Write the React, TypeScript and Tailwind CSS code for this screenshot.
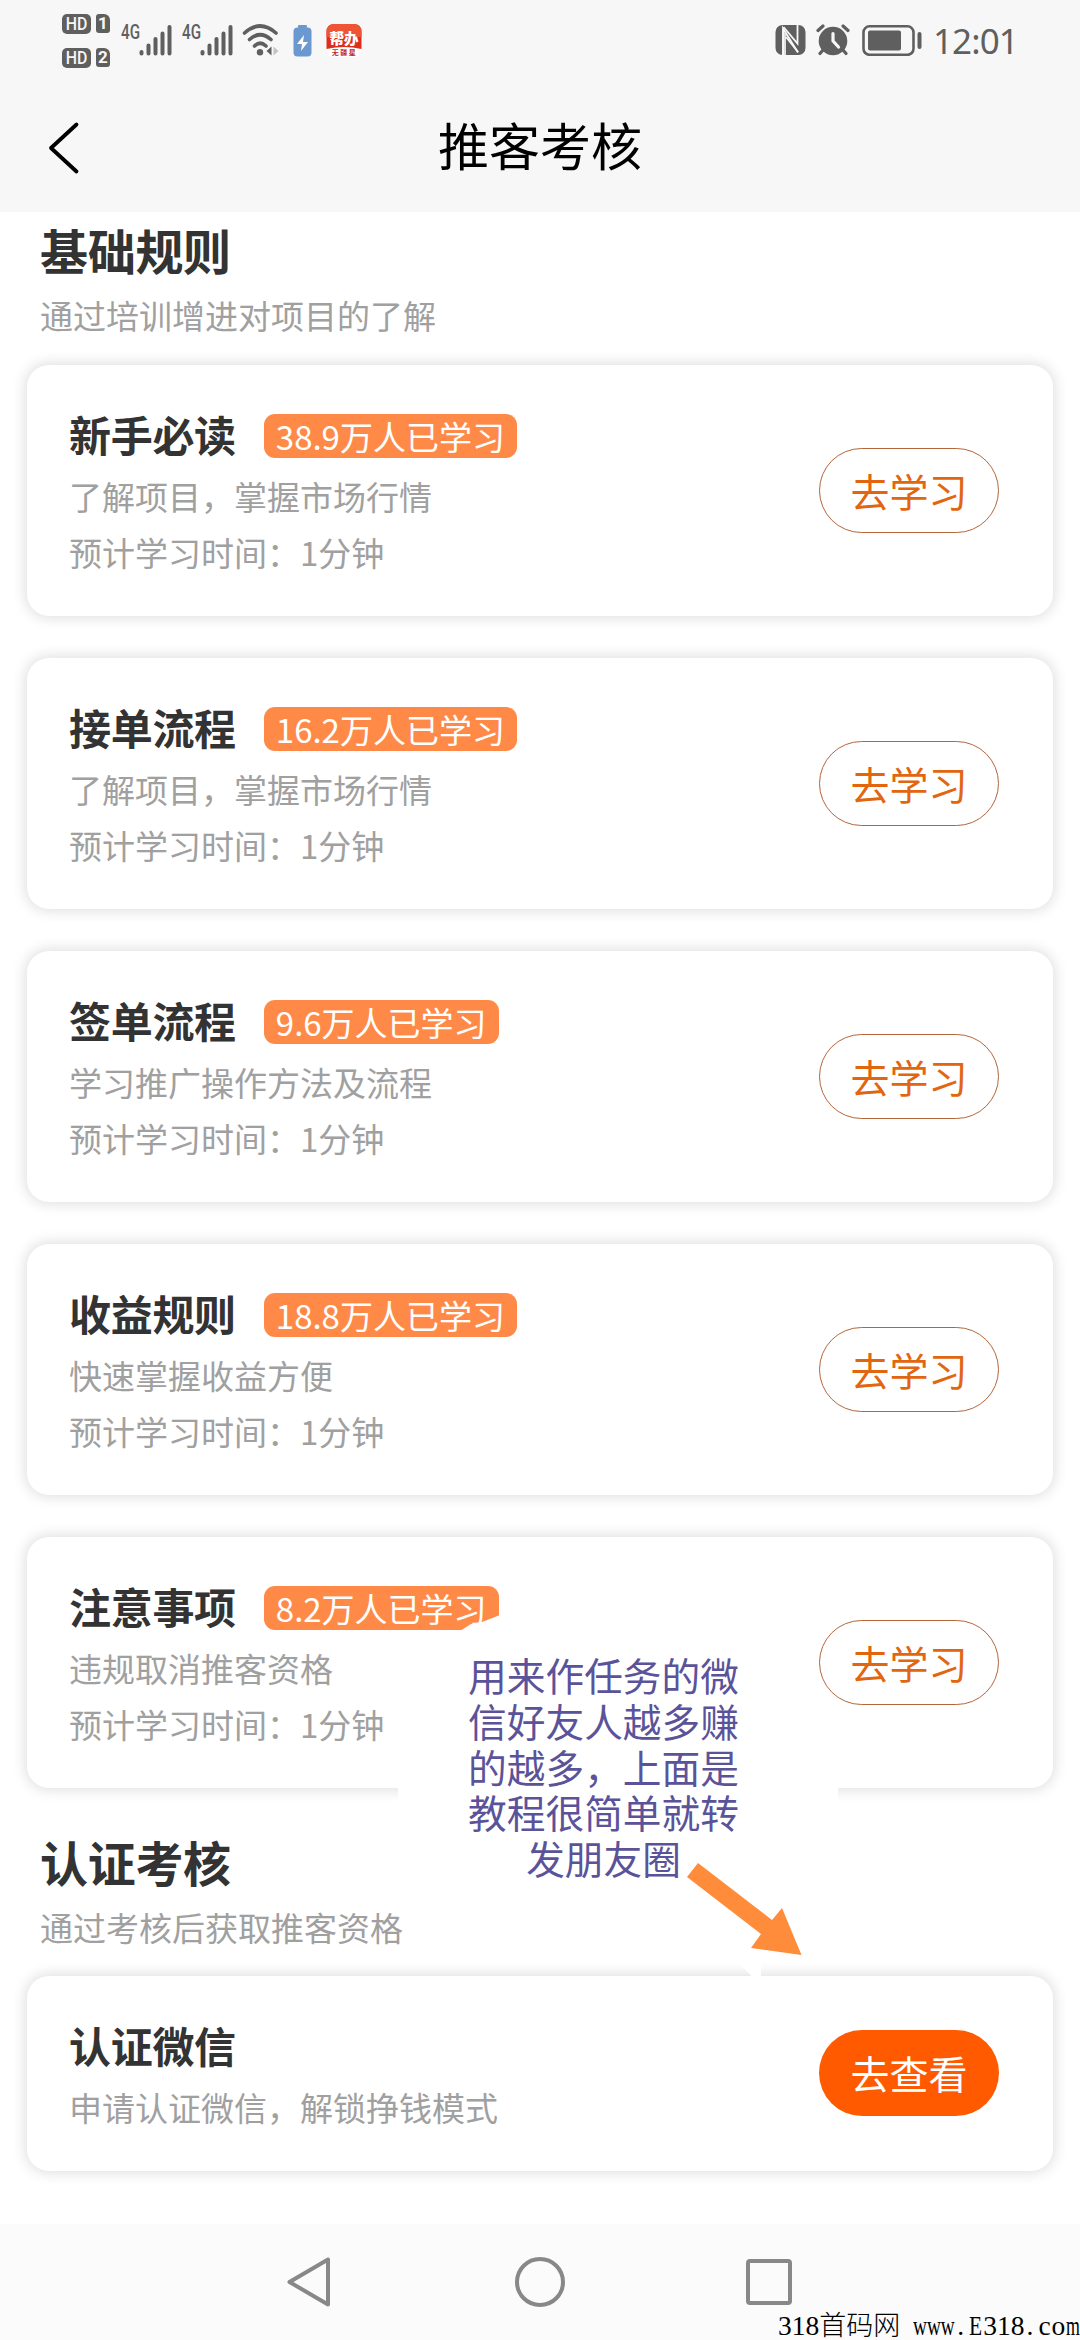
import React from "react";

type Lesson = { title: string; badge: string; desc: string };

const lessons: Lesson[] = [
  { title: "新手必读", badge: "38.9万人已学习", desc: "了解项目，掌握市场行情" },
  { title: "接单流程", badge: "16.2万人已学习", desc: "了解项目，掌握市场行情" },
  { title: "签单流程", badge: "9.6万人已学习", desc: "学习推广操作方法及流程" },
  { title: "收益规则", badge: "18.8万人已学习", desc: "快速掌握收益方便" },
  { title: "注意事项", badge: "8.2万人已学习", desc: "违规取消推客资格" },
];

const noteLines = ["用来作任务的微", "信好友人越多赚", "的越多，上面是", "教程很简单就转", "发朋友圈"];

function SimBadge({ n }: { n: string }) {
  return (
    <div className="flex h-[19px] items-center gap-[5px]">
      <span className="flex h-[20px] w-[29px] items-center justify-center rounded-[5px] bg-[#5f5f5f] font-['Roboto'] text-[18.500px] leading-[20px] font-medium text-[#f7f7f7]">
        <span className="scale-x-[0.86]">HD</span>
      </span>
      <span className="flex h-[19px] w-[14px] items-center justify-center rounded-[3px] rounded-tr-[6px] bg-[#5f5f5f] font-['Roboto'] text-[17px] leading-[19px] font-bold text-[#f7f7f7]">
        {n}
      </span>
    </div>
  );
}

function Signal() {
  return (
    <div className="flex h-[31px] w-[51px] items-start">
      <span className="w-[18px] origin-left scale-x-[0.78] font-['Roboto'] text-[19.500px] leading-[15px] font-medium text-[#5f5f5f]">4G</span>
      <svg className="h-[31px] w-[33px]" viewBox="0 0 33 31" stroke="#5f5f5f" strokeWidth="4" strokeLinecap="round">
        <path d="M2.5 27v1.5M9.5 20.5v8M16.5 14v14.5M23.5 8.5v20M30.5 2v26.5" />
      </svg>
    </div>
  );
}

function StatusBar() {
  return (
    <div className="flex h-[80px] items-start pl-[62px] text-[#5f5f5f]">
      <div className="mt-[14px] flex flex-col gap-[15px]">
        <SimBadge n="1" />
        <SimBadge n="2" />
      </div>
      <div className="mt-[25px] ml-[11px] flex gap-[10px]">
        <Signal />
        <Signal />
      </div>
      <svg className="mt-[24px] ml-[9px] h-[33px] w-[38px]" viewBox="0 0 38 33" fill="none" stroke="#5f5f5f" strokeWidth="3.6" strokeLinecap="round">
        <path d="M2.500 9Q18-5 34 9M7.500 15.500Q18 6 29 15.500M12.500 22Q18 16.500 24 22" />
        <circle cx="18" cy="28.200" r="3.200" fill="#5f5f5f" stroke="none" />
        <path d="M29.500 22.500v9l-5-4.500z" fill="#5f5f5f" stroke="none" />
        <path d="M31.500 22.500v9l5-4.500z" fill="#c4c4c4" stroke="none" />
      </svg>
      <svg className="mt-[25px] ml-[13px] h-[32px] w-[19px]" viewBox="0 0 19 32">
        <rect x="5" y="0" width="9" height="3" rx="1" fill="#6a98cf" />
        <rect x="0.500" y="2.500" width="18" height="29" rx="4" fill="#6a98cf" />
        <path d="M11 10L4 19h5l-1 7 7-9h-5z" fill="#fff" />
      </svg>
      <svg className="mt-[24px] ml-[14px] h-[33px] w-[36px]" viewBox="0 0 36 33">
        <rect x="0.500" y="0" width="35" height="33" rx="7" fill="#fff" />
        <path d="M.5 8q0-8 8-8h19q8 0 8 8v17Q18 21 .5 25z" fill="#df2d1c" />
        <path d="M.5 8q0-8 8-8h19q8 0 8 8v5H.5z" fill="#ee5535" />
        <text x="18" y="19.500" textAnchor="middle" fontSize="14.500" fontWeight="900" fill="#fff" fontFamily="Noto Sans CJK SC">帮办</text>
        <text x="18.500" y="31" textAnchor="middle" fontSize="7" letterSpacing="1.500" fontWeight="700" fill="#c22a1c" fontFamily="Noto Sans CJK SC">无疆星</text>
      </svg>
      <div className="ml-auto flex w-[305px] items-start">
        <svg className="mt-[25px] h-[30px] w-[31px]" viewBox="0 0 31 30">
          <rect x="0.500" width="30" height="30" rx="7" fill="#5f5f5f" />
          <path d="M8 30V3.500L23 27.500" stroke="#f7f7f7" strokeWidth="1.800" fill="none" />
          <path d="M8.500 2L22.500 18.500V0M11 12l12 15" stroke="#f7f7f7" strokeWidth="1.800" fill="none" />
          <path d="M7 30V4.500l4 5V30z" fill="#f7f7f7" opacity="0.85" />
        </svg>
        <svg className="mt-[24px] ml-[10px] h-[32px] w-[34px]" viewBox="0 0 34 32" fill="none" strokeLinecap="round">
          <circle cx="17" cy="17" r="14.300" fill="#5f5f5f" />
          <path d="M2 6.500L7 2M32 6.500L27 2M7 26l-3 3.500M27 26l3 3.500" stroke="#5f5f5f" strokeWidth="3.200" />
          <path d="M17 9.500V17l5.500 6" stroke="#f7f7f7" strokeWidth="3.200" />
        </svg>
        <svg className="mt-[25px] ml-[12px] h-[31px] w-[60px]" viewBox="0 0 60 31">
          <rect x="1.500" y="1.300" width="50" height="28.500" rx="6" fill="none" stroke="#5f5f5f" strokeWidth="2.600" />
          <rect x="6" y="5.500" width="33" height="20" rx="2" fill="#5f5f5f" />
          <rect x="55.500" y="7" width="4" height="17" rx="2" fill="#5f5f5f" />
        </svg>
        <span className="mt-[19px] ml-[11px] font-['Noto_Sans'] text-[35px] leading-[44px] font-normal tracking-[-0.9px]">12:01</span>
      </div>
    </div>
  );
}

function Card({ children, action, primary, className }: { children: React.ReactNode; action: string; primary?: boolean; className: string }) {
  return (
    <div className={"flex items-start justify-between rounded-[22px] bg-white pr-[54px] pl-[42px] shadow-[0_0_14px_2px_rgba(0,0,0,0.13)] " + className}>
      <div className="flex flex-col">{children}</div>
      <button
        className={
          "flex w-[180px] items-center justify-center rounded-full pb-[2px] text-[39px] leading-[44px] " +
          (primary ? "mt-[54px] h-[86px] bg-[#ff5a00] text-white" : "mt-[83px] h-[85px] border border-[#b5653a] text-[#e2660f]")
        }
      >
        {action}
      </button>
    </div>
  );
}

function SectionHead({ title, sub }: { title: string; sub: string }) {
  return (
    <div className="ml-[13px] flex flex-col">
      <h2 className="h-[60px] text-[48px] leading-[60px] font-bold tracking-[-0.3px] text-[#333]">{title}</h2>
      <p className="mt-[16px] h-[39px] text-[33px] leading-[40px] text-[#a0a0a0]">{sub}</p>
    </div>
  );
}

export default function App() {
  return (
    <div className="relative flex h-[2340px] w-[1080px] flex-col overflow-hidden bg-white font-['Noto_Sans_CJK_SC',sans-serif]">
      <header className="h-[212px] bg-[#f7f7f7]">
        <StatusBar />
        <div className="grid h-[132px] grid-cols-[1fr_auto_1fr] items-start text-black">
          <svg className="mt-[41px] ml-[47px] h-[54px] w-[34px]" viewBox="0 0 34 54" fill="none" stroke="#000" strokeWidth="3.800" strokeLinecap="round" strokeLinejoin="round">
            <path d="M29.500 3.500L4 27l25.500 23.500" />
          </svg>
          <h1 className="mt-[32px] text-[51px] leading-[64px] font-normal">推客考核</h1>
        </div>
      </header>

      <main className="flex h-[2012px] flex-col px-[27px] pt-[7px]">
        <SectionHead title="基础规则" sub="通过培训增进对项目的了解" />
        <div className="mt-[31px] flex flex-col gap-[42px]">
          {lessons.map((l) => (
            <Card key={l.title} action="去学习" className="h-[251px]">
              <div className="mt-[48px] flex h-[46px] items-center">
                <h3 className="pb-[5px] text-[42px] leading-[46px] font-bold tracking-[-0.3px] text-[#333]">{l.title}</h3>
                <span className="ml-[28px] flex h-[44px] items-center rounded-[11px] bg-[#ff8a48] px-[12px] text-[33px] leading-[44px] whitespace-nowrap text-white">
                  {l.badge}
                </span>
              </div>
              <p className="mt-[17px] text-[33px] leading-[40px] text-[#a0a0a0]">{l.desc}</p>
              <p className="mt-[16px] text-[33px] leading-[40px] text-[#a0a0a0]">预计学习时间：1分钟</p>
            </Card>
          ))}
        </div>
        <div className="mt-[43px]">
          <SectionHead title="认证考核" sub="通过考核后获取推客资格" />
        </div>
        <Card action="去查看" primary className="mt-[30px] h-[195px]">
          <h3 className="mt-[45px] text-[42px] leading-[48px] font-bold tracking-[-0.3px] text-[#333]">认证微信</h3>
          <p className="mt-[18px] text-[33px] leading-[40px] text-[#a0a0a0]">申请认证微信，解锁挣钱模式</p>
        </Card>
      </main>

      <nav className="flex h-[116px] items-start bg-[#fbfbfb] pt-[33px] pl-[286px]">
        <svg className="h-[50px] w-[46px]" viewBox="0 0 46 50" fill="none" stroke="#888" strokeWidth="4" strokeLinejoin="round">
          <path d="M3.500 25L42 2.500v45z" />
        </svg>
        <span className="ml-[183px] h-[50px] w-[50px] rounded-full border-[4px] border-[#888]" />
        <span className="mt-[2px] ml-[181px] h-[46px] w-[46px] rounded-[4px] border-[4px] border-[#888]" />
      </nav>

      {/* Note and pointer laid over the last lesson card */}
      <svg className="absolute top-[1610px] left-[398px] h-[375px] w-[440px]" viewBox="398 1610 440 375">
        <path d="M398 1645H450L460 1631 471 1624 482 1622 500 1615V1645H800V1740H838V1900H398z" fill="#fff" />
        <path d="M736 1960L752 1976.500H761V1960z" fill="#fff" />
        <path d="M698 1863L687 1877 761 1934 751 1948 801.500 1955 782 1908 772 1920z" fill="#ff8c3a" />
      </svg>
      <div className="absolute top-[1652px] left-[467px] w-[273px] text-center text-[38.700px] leading-[45.800px] text-[#5b5399]">
        {noteLines.map((line) => (
          <div key={line} className="h-[45.800px]">
            {line}
          </div>
        ))}
      </div>

      <div className="absolute top-[2312px] left-[778px] flex h-[28px] items-center font-['Liberation_Serif','Noto_Sans_CJK_SC',serif] text-[27.500px] leading-[28px] whitespace-pre text-black">
        <span>318</span>
        <span className="text-[27px] font-light">首码网</span>
        <span className="ml-[13px] w-[42px]">
          <span className="inline-block origin-left scale-x-[0.7]">www</span>
        </span>
        <span className="w-[14px] pl-[2px]">.</span>
        <span className="w-[14px]">
          <span className="inline-block origin-left scale-x-[0.78]">E</span>
        </span>
        <span>318</span>
        <span className="w-[14px] pl-[2px]">.</span>
        <span className="tracking-[0.8px]">co</span>
        <span className="w-[14px]">
          <span className="inline-block origin-left scale-x-[0.65]">m</span>
        </span>
      </div>
    </div>
  );
}
